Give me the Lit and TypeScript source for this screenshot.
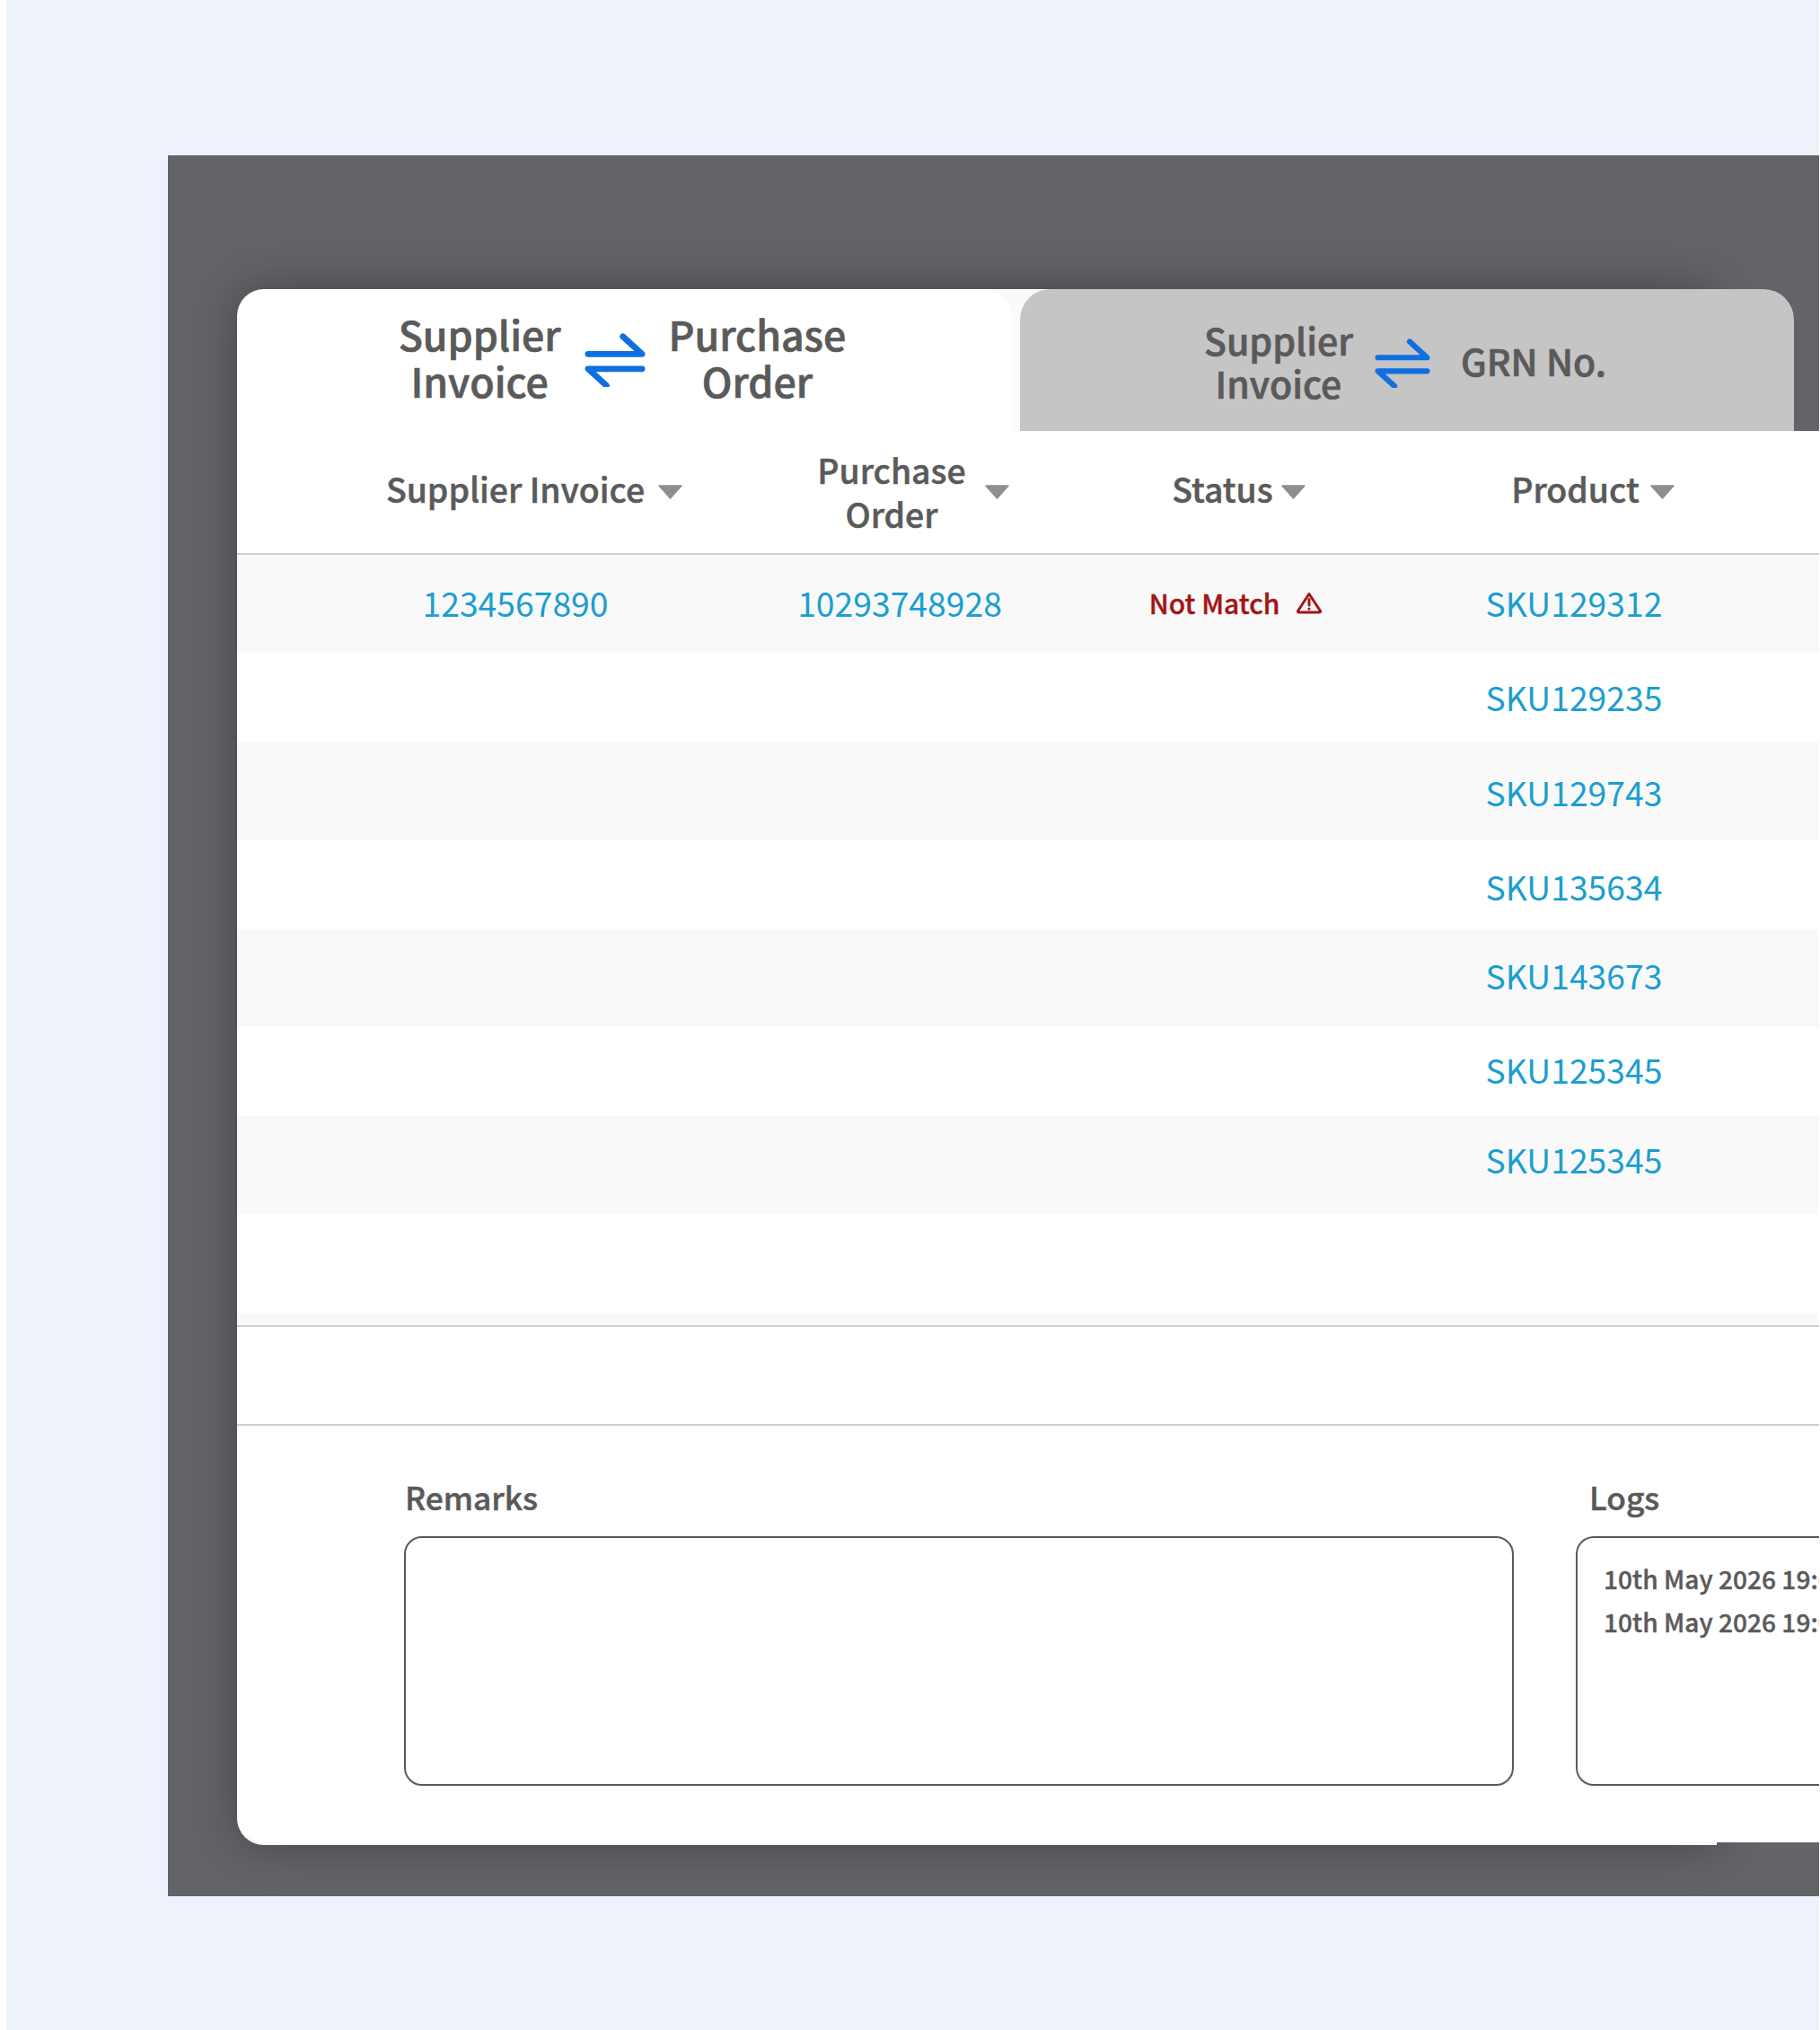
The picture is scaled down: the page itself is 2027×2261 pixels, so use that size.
import { LitElement, html, css, svg } from "lit";
import { customElement } from "lit/decorators.js";

const swap = (w: number) => html`<svg class="swap" width=${w} viewBox="0 0 70 62" fill="none" stroke="#0f6fde" stroke-width="7" stroke-linecap="round" stroke-linejoin="round">
  ${svg`<path d="M4 24H66L44 4"/><path d="M66 41H4L25 60"/>`}
</svg>`;

const caret = html`<svg class="caret" width="27" height="16" viewBox="0 0 27 16"><path d="M1 1H26L13.500 15Z" fill="#8e8e8e" stroke="#8e8e8e" stroke-width="1.500" stroke-linejoin="round"/></svg>`;

const warn = html`<svg class="warn" width="30" height="25" viewBox="0 0 30 25" fill="none" stroke="#a11616" stroke-width="3" stroke-linejoin="round" stroke-linecap="round"><path d="M15 2.500L27.500 21.500Q28 23 26 23H4Q2 23 2.500 21.500Z"/><path d="M15 8.500V15"/><path d="M15 19V19.300"/></svg>`;

const rows = [
  { sku: "SKU129312", h: 109, top: 0, lift: 4 },
  { sku: "SKU129235", h: 99, top: 0, lift: 1 },
  { sku: "SKU129743", h: 110, top: 2, lift: 0 },
  { sku: "SKU135634", h: 99, top: 2, lift: 0 },
  { sku: "SKU143673", h: 109, top: 0, lift: 8 },
  { sku: "SKU125345", h: 99, top: 0, lift: 6 },
  { sku: "SKU125345", h: 109, top: 0, lift: 14 },
];

@customElement("app-root")
export class AppRoot extends LitElement {
  static styles = css`
    :host {
      display: block;
      width: 2027px;
      height: 2261px;
      background: #fff;
      font-family: "Noto Sans CJK SC", "Noto Sans", sans-serif;
      color: #5a5a5a;
    }
    .page {
      margin-left: 7px;
      width: 2019px;
      height: 2261px;
      padding: 173px 0 0 180px;
      box-sizing: border-box;
      background: #eef2fb;
    }
    .panel {
      height: 1939px;
      padding: 149px 0 0 77px;
      box-sizing: border-box;
      background: #636468;
      overflow: hidden;
    }
    .card {
      width: 1648px;
      height: 1733px;
      background: #fafafa;
      border-radius: 30px 30px 0 30px;
      box-shadow: 0 0 50px rgba(0, 0, 0, 0.32);
    }
    .tabs {
      display: flex;
      gap: 8px;
      width: 1734px;
      height: 158px;
    }
    .tab {
      flex: 1;
      display: flex;
      align-items: center;
      justify-content: center;
      border-radius: 34px 34px 0 0;
      font-weight: 500;
      text-align: center;
      -webkit-text-stroke: 0.7px #5a5a5a;
    }
    .tab.on {
      background: #fff;
      font-size: 44.700px;
      line-height: 52px;
      gap: 26px;
      padding: 0 6px 7px 0;
    }
    .tab.on .swap {
      width: 68px;
      margin-top: 7px;
    }
    .tab.off {
      background: #c5c5c5;
      font-size: 41px;
      line-height: 48px;
      gap: 24px;
      padding: 2px 4px 0 0;
    }
    .tab.off .swap {
      width: 62px;
      margin: 5px 10px 0 0;
    }
    .tab.off .grn {
      margin-top: -2px;
    }
    .body {
      width: 1762px;
      height: 1572px;
      background: #fff;
      border-radius: 0 0 0 30px;
    }
    .grid {
      display: grid;
      grid-template-columns: 620px 236px 514px 238px 1fr;
    }
    .head {
      height: 136px;
      border-bottom: 2px solid #cfcfcf;
      font-size: 37.400px;
      line-height: 49px;
      font-weight: 500;
      -webkit-text-stroke: 0.5px #5a5a5a;
    }
    .th {
      display: flex;
      align-items: center;
      justify-content: center;
      text-align: center;
      gap: 15px;
    }
    .th span {
      position: relative;
      top: -4px;
    }
    .th .caret {
      flex: none;
      margin-right: -42px;
    }
    .th.po span {
      top: 0;
    }
    .th.po {
      gap: 21px;
      padding-right: 12px;
    }
    .th.status {
      gap: 9px;
      padding-left: 5px;
    }
    .th.status .caret {
      margin-right: 0;
    }
    .th.product {
      gap: 12px;
    }
    .row {
      align-items: center;
      font-size: 37.300px;
      color: #1b9ed0;
      text-align: center;
      box-sizing: border-box;
    }
    .row.odd {
      background: #f9f9f9;
    }
    .nm {
      display: flex;
      align-items: center;
      justify-content: center;
      gap: 18px;
      color: #a11616;
      font-size: 30px;
      font-weight: 500;
      -webkit-text-stroke: 0.4px #a11616;
    }
    .nm svg {
      margin: 2px 1px 0 0;
    }
    .spacer {
      height: 111px;
    }
    .foot {
      height: 13px;
      background: #f9f9f9;
    }
    .sep {
      height: 108px;
      border-top: 2px solid #cfcfcf;
      border-bottom: 2px solid #cfcfcf;
    }
    .notes {
      display: flex;
      padding: 54px 0 0 186px;
      gap: 69px;
    }
    .note h3 {
      margin: 0 0 19px;
      font-size: 35.300px;
      line-height: 50px;
      font-weight: 500;
      -webkit-text-stroke: 0.5px #5a5a5a;
    }
    .remarks {
      width: 1236px;
    }
    .remarks h3 {
      padding-left: 1px;
    }
    .logs {
      flex: 1;
      min-width: 0;
    }
    .logs h3 {
      padding-left: 15px;
    }
    .box {
      height: 278px;
      box-sizing: border-box;
      border: 2px solid #5a5a5a;
      border-radius: 20px;
    }
    .logs .box {
      border-right: none;
      border-radius: 20px 0 0 20px;
      padding: 21px 0 0 29px;
      font-size: 28.100px;
      line-height: 48px;
      font-weight: 500;
      white-space: nowrap;
      overflow: hidden;
      -webkit-text-stroke: 0.4px #5a5a5a;
    }
  `;

  render() {
    return html`<div class="page">
      <div class="panel">
        <div class="card">
          <div class="tabs">
            <div class="tab on"><div>Supplier<br />Invoice</div>${swap(70)}<div>Purchase<br />Order</div></div>
            <div class="tab off"><div>Supplier<br />Invoice</div>${swap(62)}<div class="grn">GRN No.</div></div>
          </div>
          <div class="body">
            <div class="grid head">
              <div class="th"><span>Supplier Invoice</span>${caret}</div>
              <div class="th po"><span>Purchase<br />Order</span>${caret}</div>
              <div class="th status"><span>Status</span>${caret}</div>
              <div class="th product"><span>Product</span>${caret}</div>
              <div></div>
            </div>
            ${rows.map(
              (r, i) => html`<div class="grid row ${i % 2 === 0 ? "odd" : ""}" style="height:${r.h}px;padding-top:${r.top}px;padding-bottom:${r.lift}px">
                <div>${i === 0 ? "1234567890" : ""}</div>
                <div>${i === 0 ? "10293748928" : ""}</div>
                <div>${i === 0 ? html`<div class="nm"><span>Not Match</span>${warn}</div>` : ""}</div>
                <div>${r.sku}</div>
                <div></div>
              </div>`
            )}
            <div class="spacer"></div>
            <div class="foot"></div>
            <div class="sep"></div>
            <div class="notes">
              <div class="note remarks"><h3>Remarks</h3><div class="box"></div></div>
              <div class="note logs">
                <h3>Logs</h3>
                <div class="box"><div>10th May 2026 19:04</div><div>10th May 2026 19:04</div></div>
              </div>
            </div>
          </div>
        </div>
      </div>
    </div>`;
  }
}
